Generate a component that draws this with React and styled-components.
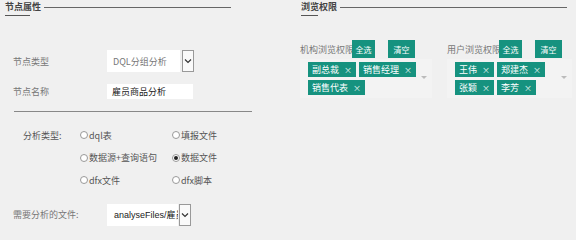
import React from 'react';
import styled, { createGlobalStyle } from 'styled-components';

const Global = createGlobalStyle`
  html, body { margin: 0; padding: 0; background: #f0f0f0; }
  body { font-family: "Noto Sans CJK SC", "Liberation Sans", sans-serif; font-size: 9px; color: #666; }
`;

const Page = styled.div`
  width: 576px;
  height: 240px;
  display: flex;
  background: #f0f0f0;
  overflow: hidden;
`;

const LeftCol = styled.div`
  width: 296px;
  display: flex;
  flex-direction: column;
`;

const RightCol = styled.div`
  flex: 1;
  display: flex;
  flex-direction: column;
`;

const Header = styled.div`
  display: flex;
  flex-direction: column;
  padding: 1px 0 0 ${p => p.$left}px;
`;

const HeaderLine = styled.div`
  display: flex;
  align-items: center;
  height: 12px;
`;

const Title = styled.span`
  font-size: 9px;
  font-weight: bold;
  color: #444;
  line-height: 12px;
  margin-right: 3px;
`;

const Rule = styled.div`
  width: ${p => p.$w}px;
  height: 1px;
  background: #666;
`;

const Underline = styled.div`
  width: ${p => p.$w}px;
  height: 1px;
  background: #555;
  margin-top: 2px;
`;

const FormRow = styled.div`
  display: flex;
  align-items: center;
  padding-left: 13px;
  margin-top: ${p => p.$mt}px;
  height: ${p => p.$h}px;
`;

const Label = styled.span`
  width: 94px;
  color: #777;
`;

const SelectBox = styled.div`
  width: ${p => p.$w}px;
  height: ${p => p.$h}px;
  background: #fff;
  display: flex;
  align-items: center;
  padding-left: ${p => p.$pl}px;
  box-sizing: border-box;
  color: ${p => p.$c};
  white-space: nowrap;
  overflow: hidden;
  font-family: ${p => p.$latin ? '"Liberation Sans", "Noto Sans CJK SC", sans-serif' : 'inherit'};
`;

const DropBtn = styled.div`
  width: 12px;
  height: ${p => p.$h}px;
  margin-left: ${p => p.$ml}px;
  box-sizing: border-box;
  border: 1px solid #999;
  background: #fafafa;
  display: flex;
  align-items: center;
  justify-content: center;
`;

const Divider = styled.div`
  width: 238px;
  height: 1px;
  background: #888;
  margin: 12px 0 0 14px;
`;

const RadioGrid = styled.div`
  display: grid;
  grid-template-columns: 57px 92px 100px;
  grid-auto-rows: 22.5px;
  padding-left: 23px;
  margin-top: 12px;
  align-items: center;
`;

const RadioItem = styled.label`
  display: flex;
  align-items: center;
  color: #555;
  grid-column: ${p => p.$col};
`;

const Dot = styled.span`
  width: 6px;
  height: 6px;
  border-radius: 50%;
  border: 1px solid #999;
  background: #fff;
  margin-right: 1px;
  display: flex;
  align-items: center;
  justify-content: center;
  &::after {
    content: '';
    width: 4px;
    height: 4px;
    border-radius: 50%;
    background: ${p => p.$on ? '#222' : 'transparent'};
  }
`;

const PermRow = styled.div`
  display: flex;
  margin-top: 24px;
`;

const PermPanel = styled.div`
  width: ${p => p.$w}px;
  margin-left: ${p => p.$ml}px;
  display: flex;
  flex-direction: column;
`;

const PermHead = styled.div`
  display: flex;
  align-items: center;
  height: 18px;
`;

const PermLabel = styled.span`
  color: #777;
  width: 52px;
  white-space: nowrap;
`;

const Btn = styled.span`
  position: relative;
  background: #16927f;
  color: #fff;
  font-size: 8px;
  width: ${p => p.$w}px;
  height: 18px;
  display: flex;
  align-items: center;
  justify-content: center;
  margin-left: ${p => p.$ml}px;
`;

const TagBox = styled.div`
  position: relative;
  margin-top: 1px;
  height: 39px;
  padding: 3px 6px 0 8px;
  box-sizing: border-box;
  background: #f3f3f3;
  display: flex;
  flex-wrap: wrap;
  align-content: flex-start;
  gap: 3px;
  width: 100%;
`;

const Tag = styled.span`
  background: #16927f;
  color: #fff;
  height: 15px;
  display: flex;
  align-items: center;
  padding: 0 4px;
  white-space: nowrap;
  & > i { font-style: normal; font-size: 8px; margin-left: 5px; color: #e8f5f2; }
`;

const Caret = styled.span`
  position: absolute;
  right: 5px;
  top: 17px;
  width: 0;
  height: 0;
  border-left: 3px solid transparent;
  border-right: 3px solid transparent;
  border-top: 3px solid #bbb;
`;

const Chevron = () => (
  <svg width="8" height="6" viewBox="0 0 8 6"><path d="M1 1.5 L4 4.5 L7 1.5" fill="none" stroke="#333" strokeWidth="1.2" /></svg>
);

const radios = [
  { t: 'dql表', col: 2 }, { t: '填报文件', col: 3 },
  { t: '数据源+查询语句', col: 2 }, { t: '数据文件', col: 3, on: true },
  { t: 'dfx文件', col: 2 }, { t: 'dfx脚本', col: 3 },
];

const Perm = ({ label, tags, w, ml }) => (
  <PermPanel $w={w} $ml={ml}>
    <PermHead>
      <PermLabel>{label}</PermLabel>
      <Btn $w={23} $ml={0}>全选</Btn>
      <Btn $w={27} $ml={13}>清空</Btn>
    </PermHead>
    <TagBox>
      {tags.map(t => <Tag key={t}>{t}<i>×</i></Tag>)}
      <Caret />
    </TagBox>
  </PermPanel>
);

export default function App() {
  return (
    <Page>
      <Global />
      <LeftCol>
        <Header $left={5}>
          <HeaderLine>
            <Title>节点属性</Title>
            <Rule $w={187} />
          </HeaderLine>
          <Underline $w={25} />
        </Header>
        <FormRow $mt={34} $h={22}>
          <Label>节点类型</Label>
          <SelectBox $w={73} $h={22} $pl={6} $c="#777">DQL分组分析</SelectBox>
          <DropBtn $h={22} $ml={2}><Chevron /></DropBtn>
        </FormRow>
        <FormRow $mt={12} $h={15}>
          <Label>节点名称</Label>
          <SelectBox $w={86} $h={15} $pl={5} $c="#222">雇员商品分析</SelectBox>
        </FormRow>
        <Divider />
        <RadioGrid>
          <RadioItem $col={1}>分析类型:</RadioItem>
          {radios.map(r => (
            <RadioItem key={r.t} $col={r.col}><Dot $on={r.on} />{r.t}</RadioItem>
          ))}
        </RadioGrid>
        <FormRow $mt={12} $h={22}>
          <Label>需要分析的文件:</Label>
          <SelectBox $w={71} $h={22} $pl={7} $c="#222" $latin>analyseFiles/雇员</SelectBox>
          <DropBtn $h={22} $ml={1}><Chevron /></DropBtn>
        </FormRow>
      </LeftCol>
      <RightCol>
        <Header $left={5}>
          <HeaderLine>
            <Title>浏览权限</Title>
            <Rule $w={227} />
          </HeaderLine>
          <Underline $w={17} />
        </Header>
        <PermRow>
          <Perm label="机构浏览权限" tags={['副总裁', '销售经理', '销售代表']} w={132} ml={4} />
          <Perm label="用户浏览权限" tags={['王伟', '郑建杰', '张颖', '李芳']} w={125} ml={15} />
        </PermRow>
      </RightCol>
    </Page>
  );
}
